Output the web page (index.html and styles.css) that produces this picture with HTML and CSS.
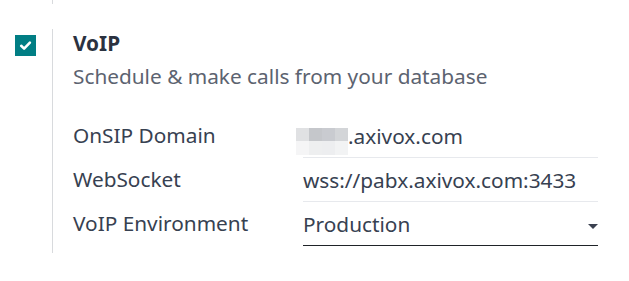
FILE: index.html
```html
<!DOCTYPE html>
<html lang="en">
<head>
<meta charset="utf-8">
<title>VoIP settings</title>
<link rel="stylesheet" href="styles.css">
</head>
<body>
<div class="settings">
  <div class="setting setting-prev">
    <div class="setting-left"></div>
    <div class="setting-right"></div>
  </div>
  <div class="setting">
    <div class="setting-left">
      <span class="checkbox">
        <svg viewBox="0 0 21 21" width="21" height="21" aria-hidden="true"><path d="M6.2 10.8 L9.1 13.6 L14.9 7.6" fill="none" stroke="#fff" stroke-width="2.6" stroke-linecap="round" stroke-linejoin="round"/></svg>
      </span>
    </div>
    <div class="setting-right">
      <div class="title">VoIP</div>
      <div class="desc">Schedule &amp; make calls from your database</div>
      <div class="fields">
        <div class="row">
          <div class="label">OnSIP Domain</div>
          <div class="value">
            <span class="redact">
              <i class="c1"></i><i class="c2"></i><i class="c3"></i><i class="c4"></i>
              <i class="c5"></i><i class="c6"></i><i class="c7"></i><i class="c8"></i>
            </span><span>.axivox.com</span>
          </div>
        </div>
        <div class="row">
          <div class="label">WebSocket</div>
          <div class="value">wss://pabx.axivox.com:3433</div>
        </div>
        <div class="row">
          <div class="label">VoIP Environment</div>
          <div class="value select"><span>Production</span><span class="caret"></span></div>
        </div>
      </div>
    </div>
  </div>
</div>
</body>
</html>
```
FILE: styles.css
```css
html, body {
  margin: 0;
  padding: 0;
  background: #ffffff;
}
body {
  font-family: "Noto Sans", "Open Sans", sans-serif;
  font-size: 20.8px;
  color: #374151;
}
.settings {
  display: flex;
  flex-direction: column;
}
.setting {
  display: flex;
}
.setting-left {
  width: 52px;
  flex: none;
  display: flex;
  justify-content: flex-start;
}
.setting-right {
  flex: 1;
  border-left: 1px solid #d8dadd;
  padding-left: 20px;
  padding-bottom: 7px;
}
.setting-prev {
  height: 4px;
  margin-bottom: 25px;
}
.setting-prev .setting-right {
  padding: 0;
}
.checkbox {
  width: 21px;
  height: 21px;
  margin: 6px 0 0 15px;
  background: #017e84;
  display: flex;
  align-items: center;
  justify-content: center;
}
.checkbox svg {
  display: block;
}
.title {
  font-weight: 700;
  line-height: 28px;
  color: #2b3240;
}
.desc {
  line-height: 28px;
  margin-top: 5px;
  color: #5c6370;
}
.fields {
  margin-top: 24px;
  display: flex;
  flex-direction: column;
}
.row {
  display: flex;
  height: 44px;
}
.label {
  width: 230px;
  flex: none;
  line-height: 28px;
  padding-top: 7px;
}
.value {
  width: 295px;
  flex: none;
  box-sizing: border-box;
  height: 44px;
  line-height: 28px;
  padding-top: 8px;
  border-bottom: 1px solid #e7e9ed;
  display: flex;
  align-items: flex-start;
}
.select {
  border-bottom-color: #1f2328;
  justify-content: space-between;
}
.caret {
  width: 0;
  height: 0;
  border-left: 5px solid transparent;
  border-right: 5px solid transparent;
  border-top: 5px solid #3b4150;
  margin-top: 14px;
}
.redact {
  display: grid;
  grid-template-columns: repeat(4, 13px);
  grid-template-rows: 13px 14px;
  margin: 6px 0 -6px -7px;
  flex: none;
}
.redact i { display: block; }
.c1 { background: #e0e1e3; }
.c2 { background: #c5c7cb; }
.c3 { background: #c9cbd0; }
.c4 { background: #d3d5d8; }
.c5 { background: #f5f5f6; }
.c6 { background: #eeeff0; }
.c7 { background: #edeef0; }
.c8 { background: #f2f3f4; }
```
